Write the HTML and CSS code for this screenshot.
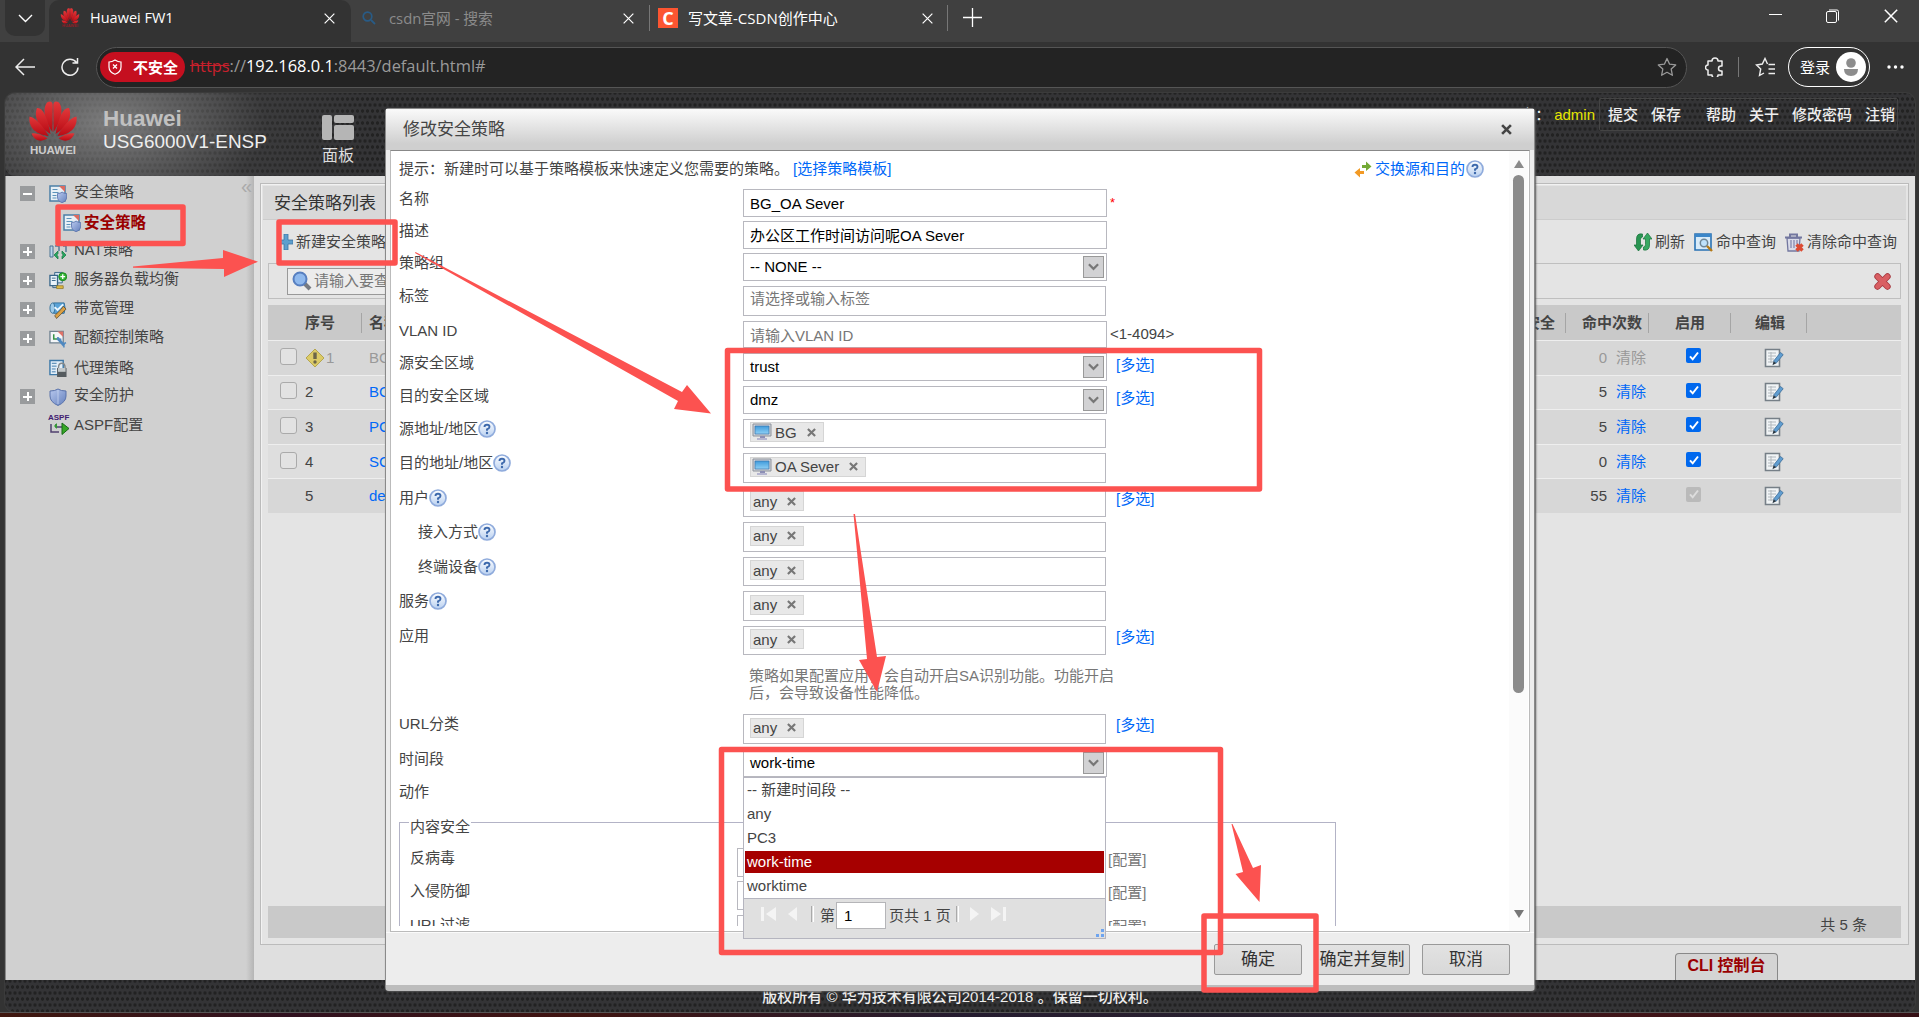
FILE: index.html
```html
<!DOCTYPE html>
<html lang="zh-CN">
<head>
<meta charset="utf-8">
<title>Huawei FW1</title>
<link rel="stylesheet" href="styles.css">
</head>
<body>
<svg class="defs" width="0" height="0" aria-hidden="true">
  <defs>
    <linearGradient id="gPetal" x1="0" y1="0" x2="0" y2="1"><stop offset="0" stop-color="#e2383a"/><stop offset="1" stop-color="#b80a14"/></linearGradient>
    <linearGradient id="gShield" x1="0" y1="0" x2="1" y2="1"><stop offset="0" stop-color="#b9c9ee"/><stop offset="1" stop-color="#6480bd"/></linearGradient>
    <linearGradient id="gScreen" x1="0" y1="0" x2="0" y2="1"><stop offset="0" stop-color="#3f9bdc"/><stop offset="1" stop-color="#8fd0f5"/></linearGradient>
    <linearGradient id="gHelp" x1="0" y1="0" x2="0" y2="1"><stop offset="0" stop-color="#fdfeff"/><stop offset="1" stop-color="#b9d0f0"/></linearGradient>
    <g id="half"><path d="M24.4 31C17 20 14 8 19 1.500C22-.5 25 0 24.700 5z"/><path d="M22.500 33C12 27 5 17 9 7C14 6 19 14 22.500 33z"/><path d="M20.500 35C9 34 0 27 1.500 15.500C8 17 15 25 20.500 35z"/><path d="M19.500 37.200C14 41 7 41 3.500 32.500C9 31.500 14 34 19.500 37.200z"/></g>
    <symbol id="huawei" viewBox="0 0 50 41"><g fill="url(#gPetal)"><use href="#half"/><use href="#half" transform="translate(50) scale(-1 1)"/></g></symbol>
    <symbol id="doc-shield" viewBox="0 0 18 18"><path d="M1 1h15v15H1z" fill="#e8f0f6" stroke="#4b7fa6" stroke-width="1.500"/><path d="M10 1h6v6z" fill="#dc6a60"/><path d="M3.500 4.500h5M3.500 7.500h6M3.500 10.500h4M3.500 13h4" stroke="#5c93ba"/><path d="M8.500 8.500q3 0 4.600-1.400q1.600 1.400 4.600 1.400v3.500q0 4-4.600 5.700q-4.600-1.700-4.600-5.700z" fill="url(#gShield)" stroke="#556fa9" stroke-width=".8"/></symbol>
    <symbol id="nat" viewBox="0 0 18 18"><path d="M1 3h3v11H1z" fill="#b9d4ea" stroke="#4b7593"/><path d="M6 3h4v5M14 3h3v6" fill="none" stroke="#557a98" stroke-width="1.500"/><path d="M9 8l-4 4 4 4v-2.500L7.800 12 9 10.500zM13 8l4 4-4 4v-2.500l1.200-1.500L13 10.500z" fill="#28a860" stroke="#147440" stroke-width=".7"/></symbol>
    <symbol id="balance" viewBox="0 0 19 19"><path d="M6 1h8v11H6z" fill="#d6e5f2" stroke="#386689"/><path d="M1 4h8v11H1z" fill="#eaf3fa" stroke="#386689" stroke-width="1.400"/><path d="M3 7h4M3 9.500h4M4 15v2h11" stroke="#386689" fill="none"/><circle cx="14.500" cy="5.500" r="4.200" fill="#35b335" stroke="#15851b"/><path d="M14.500 3v5M12 5.500h5" stroke="#fff" stroke-width="1.400"/><path d="M8 15h7v3H8z" fill="#ddb942" stroke="#8a7020" stroke-width=".7"/></symbol>
    <symbol id="bandwidth" viewBox="0 0 19 18"><ellipse cx="4" cy="7" rx="3" ry="5.500" fill="#9ecbea" stroke="#37729c"/><path d="M5 1.500h11q2 5.500 0 11H5q3-5 0-11z" fill="#5aa3d8" stroke="#37729c"/><path d="M6 6l3 3 6-6" stroke="#e9f6ff" stroke-width="2" fill="none"/><path d="M6 15l7-7 2-3 3 3-3 3-7 7z" fill="#dba044" stroke="#5c4b2d" stroke-width=".8"/></symbol>
    <symbol id="quota" viewBox="0 0 19 18"><path d="M1 1h14v12H1z" fill="#f4f6f8" stroke="#708290" stroke-width="1.400"/><path d="M9 1h6v6z" fill="#e07369"/><path d="M5 4v5h4" stroke="#37954a" stroke-width="1.600" fill="none"/><path d="M9 8l7 8" stroke="#4e88c0" stroke-width="3"/><path d="M9 7l1 3 3-1M18 13l-3 1 1 4" stroke="#4e88c0" stroke-width="1.500" fill="none"/></symbol>
    <symbol id="proxy" viewBox="0 0 19 19"><path d="M1 1h14v15H1z" fill="#e2eef8" stroke="#3c78a8" stroke-width="1.500"/><path d="M3 4h5M3 7h5M3 10h4M3 13h4" stroke="#3c78a8"/><path d="M10 9q0-5 3.500-5T17 9" fill="none" stroke="#83888b" stroke-width="1.500"/><path d="M8.500 9h10v9.500h-10z" fill="#555b5f"/><path d="M9.500 9h8v4h-8z" fill="#c3c8ca"/></symbol>
    <symbol id="shield" viewBox="0 0 18 18"><path d="M1 3q5 0 8-2q3 2 8 2v5q0 6-8 9.500Q1 14 1 8z" fill="url(#gShield)" stroke="#5a73ab"/><path d="M9 2v14" stroke="#d2def6" opacity=".7"/></symbol>
    <symbol id="aspf" viewBox="0 0 20 20"><path d="M2 9v8h8M7 9v3h6" fill="none" stroke="#50406f" stroke-width="1.500"/><path d="M5 11l3-3v6z" fill="#339b33"/><path d="M13 8l7 5.500-7 6z" fill="#37a726" stroke="#176b17"/></symbol>
    <symbol id="help" viewBox="0 0 18 18"><circle cx="9" cy="9" r="8" fill="url(#gHelp)" stroke="#8fabdc" stroke-width="1.700"/><path d="M6.500 7Q6.500 4.800 9 4.800T11.500 7Q11.500 8.300 9 9.400V10.800" fill="none" stroke="#3d69ac" stroke-width="1.900"/><circle cx="9" cy="13" r="1.200" fill="#3d69ac"/></symbol>
    <symbol id="pc" viewBox="0 0 20 18"><path d="M1 1h18v12H1z" fill="#cfd3da" stroke="#8d929b"/><path d="M3 3h14v8H3z" fill="url(#gScreen)" stroke="#3974aa" stroke-width=".7"/><path d="M8 13h5v2H8z" fill="#8d8fb5"/><path d="M5 15h10v2H5z" fill="#b5b5d0"/></symbol>
    <symbol id="edit" viewBox="0 0 20 20"><path d="M1.500 1.500h14v17h-14z" fill="#f1f4f6" stroke="#767f87" stroke-width="1.600"/><path d="M4 5h8M4 8h8M4 11h6M4 14h5M7 4v11" stroke="#b1b8bd" stroke-width="1"/><path d="M16.500 4.500l2.700 2.200-7 8.500-2.700-2z" fill="#609dd0" stroke="#3d6e9b" stroke-width=".8"/><path d="M9.500 13.200l2.700 2-3.700 2z" fill="#283642"/></symbol>
    <symbol id="refresh" viewBox="0 0 18 20"><path d="M8.500 2Q2.500 1 2.500 7v6H0l4.500 6L9 13H6.500V7.500Q6.500 5 8.500 5z" fill="#299552" stroke="#17713a" stroke-width=".7"/><path d="M9.500 18Q15.500 19 15.500 13V7H18l-4.500-6L9 7h2.500v5.500Q11.500 15 9.500 15z" fill="#37a962" stroke="#17713a" stroke-width=".7"/></symbol>
    <symbol id="query" viewBox="0 0 19 19"><path d="M1 1h16v16H1z" fill="#d8ebf9" stroke="#2872b4" stroke-width="1.600"/><path d="M1 1h16v3H1z" fill="#3b86c9"/><circle cx="10" cy="10" r="3.700" fill="#bfe2fb" stroke="#6f8798" stroke-width="1.500"/><path d="M13 13l5 5" stroke="#b57916" stroke-width="2.400"/></symbol>
    <symbol id="trash" viewBox="0 0 19 19"><path d="M2 5h13l-1 13H3z" fill="#dadce9" stroke="#73779f" stroke-width="1.300"/><path d="M0 4.500h17M5 3.500V1.500h7v2" stroke="#73779f" stroke-width="2" fill="none"/><path d="M6 7v8M9 7v8M12 7v4" stroke="#8d90b3" stroke-width="1.400"/><path d="M11.500 11.500l6 6M17.500 11.500l-6 6" stroke="#dc4b32" stroke-width="3.400"/></symbol>
    <symbol id="x" viewBox="0 0 10 10"><path d="M1 1l8 8M9 1L1 9" fill="none" stroke="currentColor" stroke-width="2.400"/></symbol>
    <symbol id="thinx" viewBox="0 0 12 12"><path d="M.7.7l10.600 10.600M11.300.7L.7 11.300" fill="none" stroke="currentColor" stroke-width="1.300"/></symbol>
    <symbol id="chev" viewBox="0 0 12 8"><path d="M1 1l5 5 5-5" fill="none" stroke="currentColor" stroke-width="2.400"/></symbol>
    <symbol id="star" viewBox="0 0 20 20"><path d="M10 1.500l2.600 5.700 6.100.7-4.500 4.200 1.200 6.200-5.400-3-5.400 3 1.200-6.200L1.300 7.900l6.100-.7z" fill="none" stroke="currentColor" stroke-width="1.300" stroke-linejoin="round"/></symbol>
    <symbol id="check" viewBox="0 0 12 12"><path d="M2 6.300l2.700 3L10 2.500" fill="none" stroke="currentColor" stroke-width="2"/></symbol>
  </defs>
</svg>

<div class="tabs">
  <div class="tab-menu"><svg width="15" height="9" viewBox="0 0 15 9"><path d="M1 1l6.500 6.500L14 1" fill="none" stroke="#fff" stroke-width="1.400"/></svg></div>
  <div class="tab active"><div class="fav"><svg width="20" height="16"><use href="#huawei"/></svg><span class="fav-name">HUAWEI</span></div><span class="tab-title t1">Huawei FW1</span><svg class="close" width="11" height="11"><use href="#thinx"/></svg></div>
  <div class="tab second"><svg width="14" height="14" viewBox="0 0 14 14"><circle cx="5.500" cy="5.500" r="4.300" fill="none" stroke="#285b86" stroke-width="1.700"/><path d="M9 9l4 4" stroke="#285b86" stroke-width="1.800"/></svg><span class="tab-title dim">csdn官网 - 搜索</span><svg class="close" width="11" height="11"><use href="#thinx"/></svg></div>
  <div class="tab third"><span class="csdn">C</span><span class="tab-title t3">写文章-CSDN创作中心</span><svg class="close" width="11" height="11"><use href="#thinx"/></svg></div>
  <svg class="plus" width="19" height="19" viewBox="0 0 19 19"><path d="M9.500 0v19M0 9.500h19" stroke="#fff" stroke-width="1.300"/></svg>
  <div class="win">
    <svg width="13" height="14" viewBox="0 0 13 14"><path d="M0 5.500h13" stroke="#fff"/></svg>
    <svg width="14" height="14" viewBox="0 0 14 14"><rect x=".5" y="2.500" width="10" height="11" rx="1.500" fill="none" stroke="#fff"/><path d="M3 1h8q1.500 0 1.500 1.500v9" fill="none" stroke="#fff"/></svg>
    <svg width="14" height="14"><use href="#thinx"/></svg>
  </div>
</div>

<div class="toolbar">
  <svg class="back" width="20" height="18" viewBox="0 0 20 18"><path d="M20 9H1M9 1L1 9l8 8" fill="none" stroke="#eee" stroke-width="1.500"/></svg>
  <svg class="reload" width="18" height="18" viewBox="0 0 18 18"><path d="M15.500 4.500A8 8 0 1 0 17 9.500M16.500 0v5h-5" fill="none" stroke="#eee" stroke-width="1.500"/></svg>
  <div class="address">
    <div class="unsafe"><svg width="14" height="16" viewBox="0 0 14 16"><path d="M7 1q3 2 6 2v5q0 5-6 7.300Q1 13 1 8V3q3 0 6-2z" fill="none" stroke="#fff" stroke-width="1.200"/><path d="M5 5.500l4 4M9 5.500l-4 4" stroke="#fff" stroke-width="1.300"/></svg><span>不安全</span></div>
    <span class="url"><s>https</s>://<b>192.168.0.1</b>:8443/default.html#</span>
    <svg class="fav-star" width="20" height="20"><use href="#star"/></svg>
  </div>
  <svg class="puzzle" width="19" height="20" viewBox="0 0 19 20"><path d="M3 4h4a3 3 0 0 1 6 0h4v5h-1a2.300 2.300 0 0 0 0 5h1v4h-4a3 3 0 0 1-6 0H3v-5a2.500 2.500 0 0 1 0-5z" fill="none" stroke="#eee" stroke-width="1.500" stroke-linejoin="round"/></svg>
  <span class="tool-sep"></span>
  <svg class="favs" width="21" height="20" viewBox="0 0 21 20"><path d="M12.500 7L10 1.500 7.300 7 1.500 8 5.700 12 4.500 18.500 9 16M13.500 7.500H20M13.500 12H20M13.500 16.500H20" fill="none" stroke="#eee" stroke-width="1.400"/></svg>
  <div class="login"><span>登录</span><svg width="30" height="30" viewBox="0 0 30 30"><circle cx="15" cy="15" r="15" fill="#fff"/><circle cx="15" cy="11" r="4.800" fill="#8d8d8d"/><path d="M8 17h14q0 7-7 7t-7-7z" fill="#8d8d8d"/></svg></div>
  <svg class="dots" width="17" height="4" viewBox="0 0 17 4"><circle cx="2" cy="2" r="1.700" fill="#fff"/><circle cx="8.500" cy="2" r="1.700" fill="#fff"/><circle cx="15" cy="2" r="1.700" fill="#fff"/></svg>
</div>

<div class="page">
  <header class="banner">
    <div class="logo"><svg width="50" height="41"><use href="#huawei"/></svg><span>HUAWEI</span></div>
    <div class="product"><strong>Huawei</strong><span>USG6000V1-ENSP</span></div>
    <div class="dash"><svg width="32" height="25" viewBox="0 0 32 25"><g fill="#b5b5b5"><rect width="10" height="25" rx="2"/><rect x="12" width="20" height="8" rx="2"/><rect x="12" y="10" width="20" height="15" rx="2"/></g></svg><span>面板</span></div>
    <div class="user">用户：<em>admin</em></div>
    <nav class="links"><span>提交</span><span>保存</span><span class="gap">帮助</span><span>关于</span><span>修改密码</span><span>注销</span></nav>
  </header>

  <div class="content">
    <aside class="side">
      <div class="node n1"><i class="tog minus"></i><svg width="18" height="18"><use href="#doc-shield"/></svg><span>安全策略</span><span class="fold">«</span></div>
      <div class="node sub"><svg width="18" height="18"><use href="#doc-shield"/></svg><span>安全策略</span></div>
      <div class="node n3"><i class="tog"></i><svg width="19" height="18"><use href="#nat"/></svg><span>NAT策略</span></div>
      <div class="node n4"><i class="tog"></i><svg width="19" height="19"><use href="#balance"/></svg><span>服务器负载均衡</span></div>
      <div class="node n5"><i class="tog"></i><svg width="19" height="18"><use href="#bandwidth"/></svg><span>带宽管理</span></div>
      <div class="node n6"><i class="tog"></i><svg width="19" height="18"><use href="#quota"/></svg><span>配额控制策略</span></div>
      <div class="node n7"><i class="tog none"></i><svg width="19" height="19"><use href="#proxy"/></svg><span>代理策略</span></div>
      <div class="node n8"><i class="tog"></i><svg width="18" height="18"><use href="#shield"/></svg><span>安全防护</span></div>
      <div class="node n9"><i class="tog none"></i><div class="aspf"><b>ASPF</b><svg width="20" height="20"><use href="#aspf"/></svg></div><span>ASPF配置</span></div>
    </aside>

    <main class="main">
      <section class="panel">
        <h2>安全策略列表</h2>
        <div class="actions">
          <svg width="14" height="16" viewBox="0 0 14 16"><path d="M5 0h4v6h5v4H9v6H5v-6H0V6h5z" fill="#5d9fce" stroke="#3c75a3" stroke-width=".8"/></svg><span class="new">新建安全策略</span>
          <div class="right"><svg width="18" height="20"><use href="#refresh"/></svg><span>刷新</span><svg width="19" height="19"><use href="#query"/></svg><span>命中查询</span><svg width="19" height="19"><use href="#trash"/></svg><span>清除命中查询</span></div>
        </div>
        <div class="search">
          <div class="search-in"><svg width="20" height="20" viewBox="0 0 20 20"><path d="M12 12l6 6" stroke="#777b82" stroke-width="4"/><circle cx="8" cy="8" r="6.500" fill="#8fb9ee" stroke="#577fc0" stroke-width="2"/></svg><span>请输入要查</span></div>
          <svg class="clear" width="17" height="17" viewBox="0 0 17 17"><path d="M3.500 3.500l10 10M13.500 3.500l-10 10" stroke="#a93b42" stroke-width="6.400" stroke-linecap="round"/><path d="M3.500 3.500l10 10M13.500 3.500l-10 10" stroke="#d95f63" stroke-width="4.600" stroke-linecap="round"/></svg>
        </div>
        <div class="tr th"><span></span><span class="c-no">序号</span><span class="c-name">名称</span><span class="c-sec">内容安全</span><span class="c-hit">命中次数</span><span class="c-on">启用</span><span class="c-edit">编辑</span><span></span></div>
        <div class="tr off"><i class="box"></i><span class="c-no"><svg width="20" height="18" viewBox="0 0 20 18"><path d="M10 0l9 9-9 9L1 9z" fill="#dccb67" stroke="#b5a64f"/><path d="M10 3.500v6.500" stroke="#6b6548" stroke-width="3.400"/><circle cx="10" cy="13" r="1.700" fill="#6b6548"/></svg>1</span><a class="c-name">BG</a><span></span><span class="c-hit"><i>0</i><a>清除</a></span><span class="c-on"><i class="on"><svg width="12" height="12"><use href="#check"/></svg></i></span><span class="c-edit"><svg width="20" height="20"><use href="#edit"/></svg></span><span></span></div>
        <div class="tr alt"><i class="box"></i><span class="c-no">2</span><a class="c-name">BG</a><span></span><span class="c-hit"><i>5</i><a>清除</a></span><span class="c-on"><i class="on"><svg width="12" height="12"><use href="#check"/></svg></i></span><span class="c-edit"><svg width="20" height="20"><use href="#edit"/></svg></span><span></span></div>
        <div class="tr"><i class="box"></i><span class="c-no">3</span><a class="c-name">PC</a><span></span><span class="c-hit"><i>5</i><a>清除</a></span><span class="c-on"><i class="on"><svg width="12" height="12"><use href="#check"/></svg></i></span><span class="c-edit"><svg width="20" height="20"><use href="#edit"/></svg></span><span></span></div>
        <div class="tr alt"><i class="box"></i><span class="c-no">4</span><a class="c-name">SC</a><span></span><span class="c-hit"><i>0</i><a>清除</a></span><span class="c-on"><i class="on"><svg width="12" height="12"><use href="#check"/></svg></i></span><span class="c-edit"><svg width="20" height="20"><use href="#edit"/></svg></span><span></span></div>
        <div class="tr"><i></i><span class="c-no">5</span><a class="c-name">de</a><span></span><span class="c-hit"><i>55</i><a>清除</a></span><span class="c-on"><i class="on dis"><svg width="12" height="12"><use href="#check"/></svg></i></span><span class="c-edit"><svg width="20" height="20"><use href="#edit"/></svg></span><span></span></div>
        <div class="total">共 5 条</div>
      </section>
      <div class="cli">CLI 控制台</div>
    </main>
  </div>
  <footer class="copy">版权所有 © 华为技术有限公司2014-2018 。保留一切权利。</footer>
</div>
<div class="desk"></div>

<div class="modal">
  <div class="m-head"><span>修改安全策略</span><svg width="11" height="11"><use href="#x"/></svg></div>
  <div class="m-body">
    <div class="form">
      <div class="hint"><span>提示：新建时可以基于策略模板来快速定义您需要的策略。</span><a>[选择策略模板]</a><span class="swap"><svg width="18" height="18" viewBox="0 0 18 18"><path d="M8 5h4V1.500l5.500 5L12 11V8H8z" fill="#74aa36"/><path d="M10 14H6v3.500L.5 12.500 6 8v3h4z" fill="#f29a25"/></svg><a>交换源和目的</a><svg width="18" height="18"><use href="#help"/></svg></span></div>
      <div class="row text"><label>名称</label><div class="in">BG_OA Sever</div><span class="note req">*</span></div>
      <div class="row text"><label>描述</label><div class="in">办公区工作时间访问呢OA Sever</div></div>
      <div class="row select"><label>策略组</label><div class="in">-- NONE --<i class="arr"><svg width="11" height="8"><use href="#chev"/></svg></i></div></div>
      <div class="row token"><label>标签</label><div class="in ph">请选择或输入标签</div></div>
      <div class="row text"><label>VLAN ID</label><div class="in ph">请输入VLAN ID</div><span class="note range">&lt;1-4094&gt;</span></div>
      <div class="row select"><label>源安全区域</label><div class="in">trust<i class="arr"><svg width="11" height="8"><use href="#chev"/></svg></i></div><a>[多选]</a></div>
      <div class="row select"><label>目的安全区域</label><div class="in">dmz<i class="arr"><svg width="11" height="8"><use href="#chev"/></svg></i></div><a>[多选]</a></div>
      <div class="row token"><label>源地址/地区<svg width="18" height="18"><use href="#help"/></svg></label><div class="in"><span class="tok pc"><svg width="20" height="18"><use href="#pc"/></svg>BG<svg class="tx" width="9" height="9"><use href="#x"/></svg></span></div></div>
      <div class="row token"><label>目的地址/地区<svg width="18" height="18"><use href="#help"/></svg></label><div class="in"><span class="tok pc"><svg width="20" height="18"><use href="#pc"/></svg>OA Sever<svg class="tx" width="9" height="9"><use href="#x"/></svg></span></div></div>
      <div class="row token"><label>用户<svg width="18" height="18"><use href="#help"/></svg></label><div class="in"><span class="tok">any<svg class="tx" width="9" height="9"><use href="#x"/></svg></span></div><a>[多选]</a></div>
      <div class="row token"><label class="ind">接入方式<svg width="18" height="18"><use href="#help"/></svg></label><div class="in"><span class="tok">any<svg class="tx" width="9" height="9"><use href="#x"/></svg></span></div></div>
      <div class="row token"><label class="ind">终端设备<svg width="18" height="18"><use href="#help"/></svg></label><div class="in"><span class="tok">any<svg class="tx" width="9" height="9"><use href="#x"/></svg></span></div></div>
      <div class="row token"><label>服务<svg width="18" height="18"><use href="#help"/></svg></label><div class="in"><span class="tok">any<svg class="tx" width="9" height="9"><use href="#x"/></svg></span></div></div>
      <div class="row token"><label>应用</label><div class="in"><span class="tok">any<svg class="tx" width="9" height="9"><use href="#x"/></svg></span></div><a>[多选]</a></div>
      <div class="tip">策略如果配置应用，会自动开启SA识别功能。功能开启<br>后，会导致设备性能降低。</div>
      <div class="row token"><label>URL分类</label><div class="in"><span class="tok">any<svg class="tx" width="9" height="9"><use href="#x"/></svg></span></div><a>[多选]</a></div>
      <div class="row select"><label>时间段</label><div class="in">work-time<i class="arr"><svg width="11" height="8"><use href="#chev"/></svg></i></div></div>
      <div class="row last"><label>动作</label></div>
      <fieldset>
        <legend>内容安全</legend>
        <div class="row sec"><label>反病毒</label><div class="in"></div><span class="cfg">[配置]</span></div>
        <div class="row sec"><label>入侵防御</label><div class="in"></div><span class="cfg">[配置]</span></div>
        <div class="row sec cut"><label>URL过滤</label><div class="in"></div><span class="cfg">[配置]</span></div>
      </fieldset>
    </div>
    <div class="scroll"><svg width="10" height="8" viewBox="0 0 10 8"><path d="M5 0l5 8H0z" fill="#8a8a8a"/></svg><i></i><svg class="down" width="10" height="8" viewBox="0 0 10 8"><path d="M0 0h10L5 8z" fill="#777"/></svg></div>
  </div>
  <div class="m-foot"><button>确定</button><button class="wide">确定并复制</button><button>取消</button></div>

  <div class="drop">
    <div class="opt">-- 新建时间段 --</div><div class="opt">any</div><div class="opt">PC3</div><div class="opt sel">work-time</div><div class="opt">worktime</div>
    <div class="pager">
      <svg width="15" height="14" viewBox="0 0 15 14"><path d="M0 0h3v14H0zM15 0v14L5 7z" fill="#f4f4f4"/></svg><svg class="prev" width="9" height="14" viewBox="0 0 9 14"><path d="M9 0v14L0 7z" fill="#f4f4f4"/></svg><i class="bar"></i><span>第</span><div class="pno">1</div><span>页共 1 页</span><i class="bar b2"></i><svg class="next" width="9" height="14" viewBox="0 0 9 14"><path d="M0 0v14l9-7z" fill="#f4f4f4"/></svg><svg width="15" height="14" viewBox="0 0 15 14"><path d="M15 0h-3v14h3zM0 0v14l10-7z" fill="#f4f4f4"/></svg>
    </div>
    <svg class="grip" width="8" height="8" viewBox="0 0 8 8"><path d="M5 0h3v3H5zM5 5h3v3H5zM0 5h3v3H0z" fill="#6ea4ef"/></svg>
  </div>
</div>

<svg class="marks" width="1919" height="1017" viewBox="0 0 1919 1017">
  <g fill="none" stroke="#fc5250" stroke-width="5.500" stroke-linejoin="round">
    <rect x="58" y="207" width="125" height="36.500"/>
    <rect x="279" y="222" width="116" height="41"/>
    <rect x="727.500" y="350.500" width="532" height="138.500"/>
    <rect x="721.500" y="749.500" width="499" height="203"/>
    <rect x="1204" y="916" width="112" height="74"/>
  </g>
  <g fill="#fc5250">
    <path d="M133 266.500L223 258V250L258 261.700L224 277V269L133 267.800z"/>
    <path d="M415.500 252L682 392L687 385L711 413.500L674 409L678 401L415 253z"/>
    <path d="M853.500 514L867 659L859 660L877 692L886 656L877 657L855 514z"/>
    <path d="M1231.500 824L1243 872L1235.500 874L1259.500 902L1261 865L1253 868L1232.500 824z"/>
  </g>
</svg>
</body>
</html>
```
FILE: styles.css
```css
* { box-sizing: border-box; }
html, body { margin: 0; }
body {
  width: 1919px; height: 1017px; overflow: hidden; position: relative;
  display: flex; flex-direction: column; background: #333;
  font-family: "Liberation Sans", "Noto Sans CJK SC", sans-serif;
  font-size: 15px; line-height: 18px; color: #444; white-space: nowrap;
}
svg { display: block; flex: none; }
.defs { position: absolute; }
i, em { font-style: normal; }
a { color: #0068f8; }

/* browser chrome */
.tabs, .toolbar { font-family: "Open Sans", "Noto Sans CJK SC", sans-serif; color: #fff; flex: none; display: flex; }
.tabs { height: 42px; background: #404040; padding-left: 5px; }
.tab-menu { width: 40px; height: 36px; background: #333; border-radius: 0 0 10px 10px; display: flex; align-items: center; justify-content: center; margin-right: 4px; }
.tab { display: flex; align-items: center; height: 36px; }
.tab .close { margin-left: auto; }
.tab.active { width: 302px; height: 42px; padding: 0 16px 6px 11px; background: #333; border-radius: 10px 10px 0 0; }
.tab.second { width: 298px; padding: 0 15px 0 11px; }
.tab.third { width: 299px; padding: 0 14px 0 8px; border-left: 1px solid #777; border-right: 1px solid #777; height: 26px; margin-top: 5px; }
.fav { width: 20px; height: 20px; }
.fav-name { display: block; font: 700 4px/4px "Liberation Sans", sans-serif; color: #8d2028; text-align: center; }
.tab-title { line-height: 20px; margin-left: 10px; }
.t1 { font-size: 14.500px; }
.dim { color: #8b8b8b; margin-left: 13px; font-size: 14.800px; }
.t3 { font-size: 15px; margin-left: 10px; }
.csdn { width: 20px; height: 20px; background: #fc5531; font: 700 18px/20px "Open Sans", sans-serif; text-align: center; }
.plus { margin: 8px 0 0 15px; }
.win { margin-left: auto; display: flex; align-items: center; height: 32px; gap: 44px; padding-right: 21px; }

.toolbar { height: 50px; margin-bottom: 1px; align-items: center; padding-left: 15px; }
.reload { margin-left: 26px; }
.address { display: flex; align-items: center; margin-left: 17px; width: 1591px; height: 41px; border: 1px solid #555; border-radius: 21px; background: #232323; padding: 0 9px 0 3px; }
.unsafe { display: flex; align-items: center; gap: 11px; width: 85px; height: 30px; padding-left: 8px; border-radius: 15px; background: #c50f1f; font-size: 15px; font-weight: 700; }
.url { margin-left: 5px; font-size: 16.400px; line-height: 24px; color: #9a9a9a; position: relative; top: -1px; }
.url b { font-weight: 400; color: #fff; }
.url s { color: #c8202c; }
.fav-star { margin-left: auto; color: #999; }
.puzzle { margin-left: 18px; }
.tool-sep { width: 1px; height: 20px; background: #777; margin: 0 16px 0 14px; }
.login { display: flex; align-items: center; justify-content: space-between; width: 82px; height: 40px; margin-left: 12px; padding: 0 3px 0 11px; border: 1.500px solid #fff; border-radius: 20px; }
.dots { margin-left: 17px; }

/* device console */
.page {
  height: 919px; flex: none; margin: 0 4px 0 5px; display: flex; flex-direction: column;
  border-radius: 10px; box-shadow: 0 0 0 1px #3b3b3b;
  background-color: #343436;
  background-image: radial-gradient(circle, #222 1.400px, transparent 2px), radial-gradient(circle, #222 1.400px, transparent 2px);
  background-size: 5px 12px; background-position: 0 0, 2.500px 6px;
}
.banner { height: 83px; display: flex; padding: 8px 17px 0 23px; background: radial-gradient(ellipse 260px 150px at 105px 30px, rgba(150,150,150,.75), rgba(80,80,80,.25) 60%, transparent); border-radius: 10px; }
.logo { width: 50px; height: 60px; }
.logo span { display: block; font: 700 11.500px/12px "Liberation Sans", sans-serif; color: #ccc; text-align: center; margin-top: 2px; }
.product { margin-left: 25px; display: flex; flex-direction: column; width: 200px; padding-top: 5px; }
.product strong { font-size: 22.500px; line-height: 25px; color: #c0c0c0; }
.product span { font-size: 18.900px; line-height: 22px; color: #eee; }
.dash { margin-left: 19px; padding-top: 14px; }
.dash span { display: block; color: #ddd; font-size: 16px; line-height: 20px; margin-top: 6px; }
.user { margin-left: auto; padding-top: 5px; color: #eee; }
.user em { color: #e6e600; margin-left: 4px; }
.links { display: flex; gap: 13px; height: 33px; width: 299px; margin: -3px 0 0 4px; padding: 7px 5px 0 8px; border: 1px solid #444; color: #eee; border-radius: 2px; font-weight: 500; }
.links .gap { margin-left: 12px; }
.content { height: 804px; flex: none; display: flex; background: #dfdfdf; }
.side { width: 249px; padding: 9px 0 0 14px; background: linear-gradient(90deg, transparent 240px, #b5b5b5), #d0d0d0; border-left: 1px solid #888; display: flex; flex-direction: column; }
.node { display: flex; align-items: center; height: 29px; flex: none; }
.node > svg, .aspf { margin-right: 7px; margin-left: 14px; }
.node > svg { width: 18px; }
.node > span { position: relative; top: -2px; }
.n1 { margin-top: -6px; }
.n1 > .fold { margin-left: auto; margin-right: 2px; color: #aaa; font-size: 20px; top: -8px; }
.sub { padding-left: 29px; font-weight: 700; color: #9a0000; }
.sub > span { font-size: 15.500px; top: 0; }
.sub > svg { margin-right: 3px; }
.n7 { height: 30px; }
.n8 { height: 27px; }
.n9 { height: 30px; }
.n7 > span, .n9 > span { top: 0; }
.tog { width: 15px; height: 15px; flex: none; background: linear-gradient(#fff, #fff) center/9px 2px no-repeat, linear-gradient(#fff, #fff) center/2px 9px no-repeat, #999b9d; }
.tog.minus { background: linear-gradient(#fff, #fff) center/9px 2px no-repeat, #999b9d; }
.tog.none { background: none; }
.aspf { width: 20px; height: 20px; position: relative; margin-right: 5px; }
.aspf b { position: absolute; left: -1px; top: -1px; font-size: 8px; line-height: 8px; color: #402070; }

.main { flex: 1; padding: 7px 6px 0 6px; }
.panel { height: 762px; border: 1px solid #bbb; background: #e4e4e4; display: flex; flex-direction: column; box-shadow: inset 1px 1px #f2f2f2; }
.panel h2 { margin: 2px 2px 0; height: 34px; padding: 0 0 0 11px; font-size: 17px; line-height: 36px; font-weight: 400; color: #333; background: #d8d8d8; border-bottom: 1px solid #ccc; }
.actions { display: flex; align-items: center; height: 43px; padding: 1px 11px 0 18px; }
.new { margin-left: 3px; }
.actions .right { margin-left: auto; display: flex; align-items: center; }
.right svg { margin-right: 3px; }
.right span + svg { margin-left: 9px; }
.search { margin: 0 7px; height: 36px; display: flex; align-items: center; justify-content: space-between; border: 1px solid #bfbfbf; padding: 0 9px 0 18px; }
.search-in { display: flex; align-items: center; width: 260px; height: 27px; border: 1px solid #999; background: #ececec; padding-left: 4px; gap: 2px; color: #777; }
.tr { display: grid; grid-template-columns: 36px 58px 1fr 100px 83px 82px 76px 94px; margin: 0 7px; height: 34.600px; align-items: center; border-top: 1px solid #eee; background: #d7d7d7; }
.tr.alt { background: #dedede; }
.tr.th { background: #c9c9c9; height: 35px; margin-top: 6px; border: 0; font-weight: 700; }
.th span { height: 20px; line-height: 20px; border-right: 1px solid #a5a5a5; }
.th span:first-child, .th span:last-child, .th .c-name { border: 0; }
.th .c-hit { padding-left: 16px; }
.th .c-on { padding-left: 26px; }
.th .c-edit { padding-left: 24px; }
.c-sec { text-align: right; padding-right: 10px; }
.box { width: 17px; height: 17px; margin: -3px 0 0 12px; border: 1.500px solid #aaa; border-radius: 3px; background: #e2e2e2; }
.c-no { display: flex; align-items: center; padding-left: 1px; gap: 1px; }
.c-name { padding-left: 7px; }
.tr:not(.th) .c-hit { display: flex; }
.c-hit i { width: 41px; text-align: right; margin-right: 9px; }
.tr:not(.th) .c-on { padding-left: 37px; }
.tr:not(.th) .c-edit { padding-left: 33px; }
.off, .off a { color: #999; }
.on { width: 15px; height: 15px; margin-top: -4px; border-radius: 2px; background: #0068ee; color: #fff; display: flex; align-items: center; justify-content: center; }
.on.dis { background: #bababa; color: #ddd; }
.total { margin: auto 7px 6px; height: 32px; line-height: 38px; background: #c9c9c9; text-align: right; padding-right: 34px; }
.cli { margin: 8px 131px 0 auto; width: 103px; height: 27px; border: 1.500px solid #888; border-bottom: 0; border-radius: 4px 4px 0 0; background: #d4d4d4; color: #9a0000; font-size: 16px; font-weight: 700; line-height: 23px; text-align: center; }
.copy { height: 31px; line-height: 34px; color: #eee; font-weight: 500; font-size: 15px; text-align: center; }
.desk { height: 5px; border-top: 1px solid #555; background: linear-gradient(90deg, #40180f, #30111f 15%, #401410 30%, #251c30 50%, #28202c 70%, #401417 85%, #351015); }

/* edit dialog */
.modal { position: absolute; left: 385px; top: 108px; width: 1150px; height: 883px; border: 1.500px solid #8a8a8a; border-bottom: 6px solid #bdbdbd; border-radius: 4px; background: #ededed; display: flex; flex-direction: column; box-shadow: 1px 1px 2px #555; }
.m-head { height: 41px; flex: none; display: flex; justify-content: space-between; align-items: center; padding: 0 22px 0 17px; font-size: 17px; color: #444; background: linear-gradient(#fafafa, #cfcfcf 85%); }
.m-body { height: 782px; flex: none; margin: 0 4px; border: 1px solid #bbb; border-top-color: #888; background: #fff; display: flex; }
.form { width: 1118px; height: 775px; padding: 9px 0 0 8px; overflow: hidden; }
.hint { display: flex; height: 29px; }
.hint > a { margin-left: 4px; }
.swap { margin-left: auto; margin-right: 25px; display: flex; height: 18px; }
.swap a { margin: 0 1px 0 3px; }
.row { display: flex; }
.row.text { height: 32px; }
.row.select { height: 33px; }
.row.token { height: 34.500px; }
.row label { width: 344px; flex: none; display: flex; height: 18px; margin-top: 1px; }
.row label.ind { padding-left: 19px; }
.in { width: 364px; height: 27.500px; line-height: 27px; padding-left: 6px; border: 1px solid #b8b8bf; color: #000; display: flex; }
.in.ph { color: #777; }
.token .in { width: 363px; height: 29.500px; line-height: 23px; }
.select .in { height: 28px; line-height: 26px; }
.arr { width: 21px; height: 22px; margin: 2px 2px 0 auto; border: 1px solid #999; background: #d2d2d4; color: #777; display: flex; align-items: center; justify-content: center; }
.tok { display: flex; align-items: center; height: 20px; margin-top: 2.500px; padding: 0 7px 0 2px; border: 1px solid #d5d5d5; background: #e8e8e8; color: #444; }
.tok.pc { padding-left: 1px; }
.tok.pc > svg:first-child { margin-right: 3px; }
.tx { margin-left: 10px; color: #777; }
.row > a { margin: 3px 0 0 9px; }
.token > a { margin: 2px 0 0 10px; }
.note { margin-left: 3px; padding-top: 4px; }
.req { color: #f00; font-size: 13px; padding-top: 5px; }
.tip { height: 54px; padding: 7px 0 0 350px; line-height: 17px; color: #777; }
.row.last { height: 36px; }
fieldset { width: 937px; height: 200px; margin: 0; padding: 0 0 0 10px; border: 1px solid #b3b3c6; }
legend { padding: 0 1px; margin-left: -1px; line-height: 18px; height: 10px; }
.sec { height: 33.500px; }
.sec:first-of-type { margin-top: 20px; }
.sec label { width: 327px; }
.sec .in { width: 364px; height: 29px; }
.cfg { margin: 3px 0 0 7px; color: #777; }
.scroll { width: 19px; background: #fbfbfb; display: flex; flex-direction: column; align-items: center; padding: 9px 0 13px; }
.scroll i { width: 11px; height: 518px; margin-top: 7px; border-radius: 6px; background: #8b8b8b; }
.scroll .down { margin-top: auto; }
.m-foot { display: flex; justify-content: flex-end; padding: 11px 24px 0 0; border-top: 1px solid #fafafa; }
.m-foot button { width: 88px; height: 31px; margin: 0 0 0 12px; padding: 0; font: 17px/20px "Liberation Sans", "Noto Sans CJK SC", sans-serif; color: #333; border: 1px solid #999; border-radius: 2px; background: linear-gradient(#e2e2e2, #d8d8d8); }
.m-foot .wide { width: 96px; }

.drop { position: absolute; left: 357px; top: 668px; width: 363px; height: 162px; border: 1px solid #b5b5bf; background: #fff; }
.opt { height: 24px; line-height: 24px; padding-left: 3px; }
.opt.sel { height: 22px; line-height: 22px; margin: 1px; padding-left: 2px; background: #a60000; color: #fff; }
.pager { height: 40px; border-top: 1px solid #b5b5bf; background: #e0e0e0; display: flex; align-items: center; padding: 0 0 9px 17px; }
.prev { margin-left: 12px; }
.bar { width: 3px; height: 16px; border-left: 1px solid #aaa; border-right: 1px solid #fff; margin: 0 6px 0 14px; }
.pno { width: 50px; height: 27px; border: 1px solid #b5b5b8; background: #fff; color: #000; line-height: 25px; padding-left: 7px; margin: 2px 3px 0 1px; }
.pager span { padding-top: 4px; }
.bar.b2 { margin: 0 11px 0 5px; }
.next { margin-right: 12px; }
.grip { position: absolute; right: 1px; bottom: 1px; }

/* hand-drawn markers */
.marks { position: absolute; left: 0; top: 0; }
```
